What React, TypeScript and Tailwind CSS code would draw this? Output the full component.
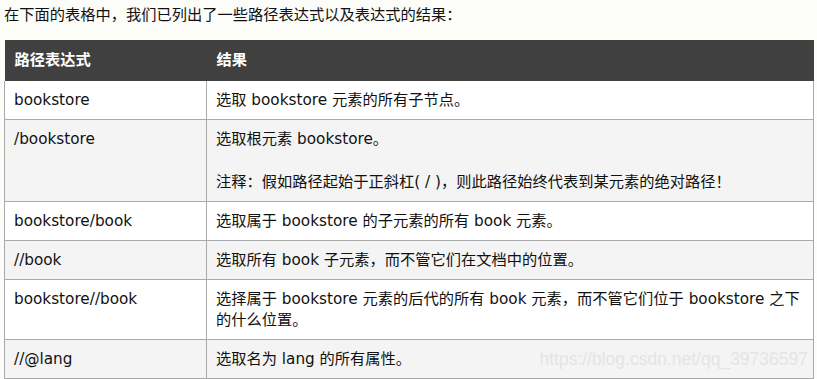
import React from "react"

interface Row {
    expr: string
    result: React.ReactNode
}

const rows: Row[] = [
    { expr: "bookstore", result: "选取 bookstore 元素的所有子节点。" },
    {
        expr: "/bookstore",
        result: (
            <>
                <p>选取根元素 bookstore。</p>
                <p className="mt-[22px]">注释：假如路径起始于正斜杠( / )，则此路径始终代表到某元素的绝对路径！</p>
            </>
        ),
    },
    { expr: "bookstore/book", result: "选取属于 bookstore 的子元素的所有 book 元素。" },
    { expr: "//book", result: "选取所有 book 子元素，而不管它们在文档中的位置。" },
    {
        expr: "bookstore//book",
        result: "选择属于 bookstore 元素的后代的所有 book 元素，而不管它们位于 bookstore 之下的什么位置。",
    },
    { expr: "//@lang", result: "选取名为 lang 的所有属性。" },
]

const App: React.FC = () => {
    return (
        <div
            className="w-[817px] h-[379px] overflow-hidden bg-[#fcfcf9] text-[#111] text-[15.25px] leading-[21px]"
            style={{ fontFamily: '"DejaVu Sans", "Noto Sans CJK SC", sans-serif' }}
        >
            <p className="pl-[4px] pt-[5px] h-[40px]">在下面的表格中，我们已列出了一些路径表达式以及表达式的结果：</p>

            <div className="relative ml-[4px] w-[810px]">
                <table className="w-full border-collapse table-fixed">
                    <colgroup>
                        <col className="w-[202px]" />
                        <col />
                    </colgroup>
                    <thead>
                        <tr className="bg-[#404040] text-white h-[41px]">
                            <th className="text-left font-bold px-[10px] align-middle">路径表达式</th>
                            <th className="text-left font-bold px-[10px] align-middle">结果</th>
                        </tr>
                    </thead>
                    <tbody>
                        {rows.map((row, i) => (
                            <tr key={row.expr} className={i % 2 === 1 ? "bg-[#f4f4f4]" : "bg-white"}>
                                <td className="border border-[#aaaaaa] border-t-0 align-top px-[9px] pt-[9px] pb-[8px]">
                                    {row.expr}
                                </td>
                                <td className="border border-[#aaaaaa] border-t-0 align-top px-[9px] pt-[9px] pb-[8px]">
                                    {row.result}
                                </td>
                            </tr>
                        ))}
                    </tbody>
                </table>

                {/* watermark */}
                <span
                    className="absolute right-[6px] bottom-[9px] text-[17.5px] text-[#e4e4e4] pointer-events-none"
                    style={{ fontFamily: '"Liberation Sans", Arial, sans-serif' }}
                >
                    https://blog.csdn.net/qq_39736597
                </span>
            </div>
        </div>
    )
}

export default App
